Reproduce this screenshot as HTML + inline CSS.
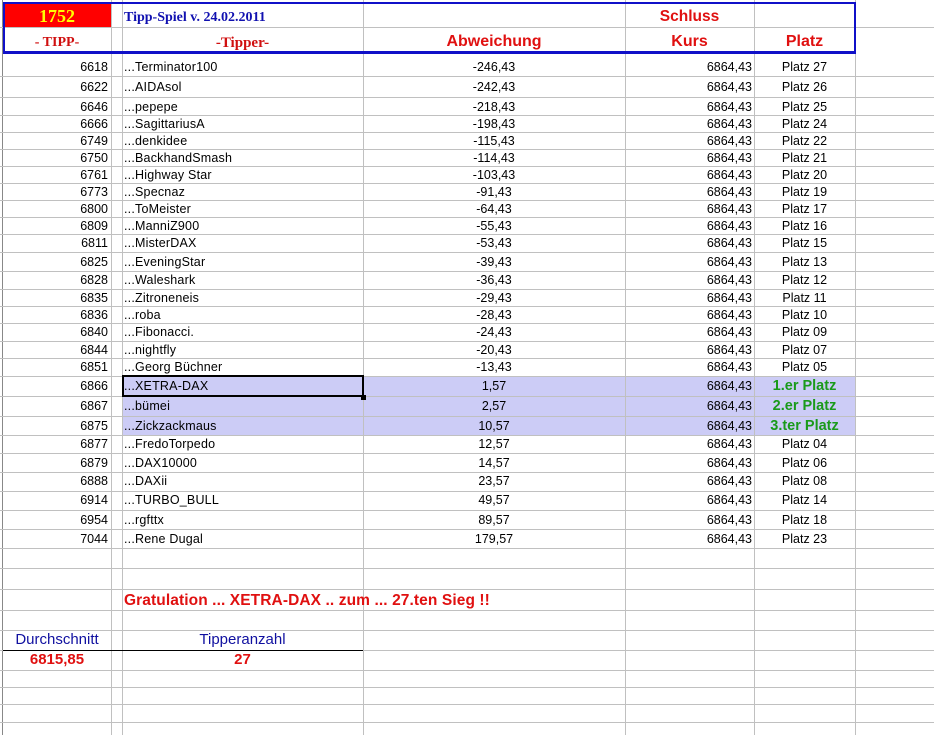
<!DOCTYPE html>
<html><head><meta charset="utf-8"><style>
*{margin:0;padding:0;box-sizing:border-box}
body{width:934px;height:735px;background:#fff;position:relative;overflow:hidden;font-family:"Liberation Sans",Arial,sans-serif;font-size:12.5px;color:#000}
.v{position:absolute;top:0;width:1px;height:735px;background:#c0c0c0}
.h{position:absolute;left:0;width:934px;height:1px;background:#c0c0c0}
.r{position:absolute;left:0;width:934px;height:16px;line-height:16px}
.r span{position:absolute;top:0;white-space:nowrap}
.a{right:826px;text-align:right}
.b{left:124px;letter-spacing:0.2px}
.c{left:363px;width:262px;text-align:center}
.d{right:182px}
.e{left:754px;width:101px;text-align:center}
.g{color:#1a9a1a;font-weight:bold;font-size:14.5px}
.hl{position:absolute;left:122px;width:733px;background:#ccccf6}
</style></head><body>
<div class="hl" style="top:376px;height:59px"></div>
<div class="v" style="left:2px;background:#888"></div>
<div class="v" style="left:111px"></div>
<div class="v" style="left:122px"></div>
<div class="v" style="left:363px"></div>
<div class="v" style="left:625px"></div>
<div class="v" style="left:754px"></div>
<div class="v" style="left:855px"></div>
<div class="h" style="top:27px"></div>
<div class="h" style="top:76px"></div><div class="h" style="top:97px"></div><div class="h" style="top:115px"></div><div class="h" style="top:132px"></div><div class="h" style="top:149px"></div><div class="h" style="top:166px"></div><div class="h" style="top:183px"></div><div class="h" style="top:200px"></div><div class="h" style="top:217px"></div><div class="h" style="top:234px"></div><div class="h" style="top:252px"></div><div class="h" style="top:271px"></div><div class="h" style="top:289px"></div><div class="h" style="top:306px"></div><div class="h" style="top:323px"></div><div class="h" style="top:341px"></div><div class="h" style="top:358px"></div><div class="h" style="top:376px"></div><div class="h" style="top:396px"></div><div class="h" style="top:416px"></div><div class="h" style="top:435px"></div><div class="h" style="top:453px"></div><div class="h" style="top:472px"></div><div class="h" style="top:491px"></div><div class="h" style="top:510px"></div><div class="h" style="top:529px"></div><div class="h" style="top:548px"></div><div class="h" style="top:568px"></div><div class="h" style="top:589px"></div><div class="h" style="top:610px"></div><div class="h" style="top:630px"></div><div class="h" style="top:650px"></div><div class="h" style="top:670px"></div><div class="h" style="top:687px"></div><div class="h" style="top:704px"></div><div class="h" style="top:722px"></div>
<div style="position:absolute;left:3px;top:650px;width:360px;height:1px;background:#000"></div>
<!-- header -->
<div style="position:absolute;left:3px;top:3px;width:108px;height:24px;background:#f00;color:#ff0;font:bold 18px 'Liberation Serif',serif;text-align:center;line-height:26px">1752</div>
<div style="position:absolute;left:3px;top:2px;width:853px;height:52px;border:2px solid #1010c8;border-bottom-width:3px"></div>
<div style="position:absolute;left:124px;top:10px;color:#1010b0;font:bold 14px 'Liberation Serif',serif">Tipp-Spiel v. 24.02.2011</div>
<div style="position:absolute;left:625px;top:8px;width:129px;text-align:center;color:#e01010;font-weight:bold;font-size:15.5px">Schluss</div>
<div style="position:absolute;left:3px;top:35px;width:108px;text-align:center;color:#d01010;font:bold 14px 'Liberation Serif',serif">- TIPP-</div>
<div style="position:absolute;left:122px;top:35px;width:241px;text-align:center;color:#d01010;font:bold 15px 'Liberation Serif',serif">-Tipper-</div>
<div style="position:absolute;left:363px;top:33px;width:262px;text-align:center;color:#e01010;font-weight:bold;font-size:16px">Abweichung</div>
<div style="position:absolute;left:625px;top:33px;width:129px;text-align:center;color:#e01010;font-weight:bold;font-size:16px">Kurs</div>
<div style="position:absolute;left:754px;top:33px;width:101px;text-align:center;color:#e01010;font-weight:bold;font-size:16px">Platz</div>
<!-- rows -->
<div class="r" style="top:59px"><span class="a">6618</span><span class="b">...Terminator100</span><span class="c">-246,43</span><span class="d">6864,43</span><span class="e">Platz 27</span></div>
<div class="r" style="top:79px"><span class="a">6622</span><span class="b">...AIDAsol</span><span class="c">-242,43</span><span class="d">6864,43</span><span class="e">Platz 26</span></div>
<div class="r" style="top:99px"><span class="a">6646</span><span class="b">...pepepe</span><span class="c">-218,43</span><span class="d">6864,43</span><span class="e">Platz 25</span></div>
<div class="r" style="top:116px"><span class="a">6666</span><span class="b">...SagittariusA</span><span class="c">-198,43</span><span class="d">6864,43</span><span class="e">Platz 24</span></div>
<div class="r" style="top:133px"><span class="a">6749</span><span class="b">...denkidee</span><span class="c">-115,43</span><span class="d">6864,43</span><span class="e">Platz 22</span></div>
<div class="r" style="top:150px"><span class="a">6750</span><span class="b">...BackhandSmash</span><span class="c">-114,43</span><span class="d">6864,43</span><span class="e">Platz 21</span></div>
<div class="r" style="top:167px"><span class="a">6761</span><span class="b">...Highway Star</span><span class="c">-103,43</span><span class="d">6864,43</span><span class="e">Platz 20</span></div>
<div class="r" style="top:184px"><span class="a">6773</span><span class="b">...Specnaz</span><span class="c">-91,43</span><span class="d">6864,43</span><span class="e">Platz 19</span></div>
<div class="r" style="top:201px"><span class="a">6800</span><span class="b">...ToMeister</span><span class="c">-64,43</span><span class="d">6864,43</span><span class="e">Platz 17</span></div>
<div class="r" style="top:218px"><span class="a">6809</span><span class="b">...ManniZ900</span><span class="c">-55,43</span><span class="d">6864,43</span><span class="e">Platz 16</span></div>
<div class="r" style="top:235px"><span class="a">6811</span><span class="b">...MisterDAX</span><span class="c">-53,43</span><span class="d">6864,43</span><span class="e">Platz 15</span></div>
<div class="r" style="top:254px"><span class="a">6825</span><span class="b">...EveningStar</span><span class="c">-39,43</span><span class="d">6864,43</span><span class="e">Platz 13</span></div>
<div class="r" style="top:272px"><span class="a">6828</span><span class="b">...Waleshark</span><span class="c">-36,43</span><span class="d">6864,43</span><span class="e">Platz 12</span></div>
<div class="r" style="top:290px"><span class="a">6835</span><span class="b">...Zitroneneis</span><span class="c">-29,43</span><span class="d">6864,43</span><span class="e">Platz 11</span></div>
<div class="r" style="top:307px"><span class="a">6836</span><span class="b">...roba</span><span class="c">-28,43</span><span class="d">6864,43</span><span class="e">Platz 10</span></div>
<div class="r" style="top:324px"><span class="a">6840</span><span class="b">...Fibonacci.</span><span class="c">-24,43</span><span class="d">6864,43</span><span class="e">Platz 09</span></div>
<div class="r" style="top:342px"><span class="a">6844</span><span class="b">...nightfly</span><span class="c">-20,43</span><span class="d">6864,43</span><span class="e">Platz 07</span></div>
<div class="r" style="top:359px"><span class="a">6851</span><span class="b">...Georg  Büchner</span><span class="c">-13,43</span><span class="d">6864,43</span><span class="e">Platz 05</span></div>
<div class="r" style="top:378px"><span class="a">6866</span><span class="b">...XETRA-DAX</span><span class="c">1,57</span><span class="d">6864,43</span><span class="e g">1.er Platz</span></div>
<div class="r" style="top:398px"><span class="a">6867</span><span class="b">...bümei</span><span class="c">2,57</span><span class="d">6864,43</span><span class="e g">2.er Platz</span></div>
<div class="r" style="top:418px"><span class="a">6875</span><span class="b">...Zickzackmaus</span><span class="c">10,57</span><span class="d">6864,43</span><span class="e g">3.ter Platz</span></div>
<div class="r" style="top:436px"><span class="a">6877</span><span class="b">...FredoTorpedo</span><span class="c">12,57</span><span class="d">6864,43</span><span class="e">Platz 04</span></div>
<div class="r" style="top:455px"><span class="a">6879</span><span class="b">...DAX10000</span><span class="c">14,57</span><span class="d">6864,43</span><span class="e">Platz 06</span></div>
<div class="r" style="top:473px"><span class="a">6888</span><span class="b">...DAXii</span><span class="c">23,57</span><span class="d">6864,43</span><span class="e">Platz 08</span></div>
<div class="r" style="top:492px"><span class="a">6914</span><span class="b">...TURBO_BULL</span><span class="c">49,57</span><span class="d">6864,43</span><span class="e">Platz 14</span></div>
<div class="r" style="top:512px"><span class="a">6954</span><span class="b">...rgfttx</span><span class="c">89,57</span><span class="d">6864,43</span><span class="e">Platz 18</span></div>
<div class="r" style="top:531px"><span class="a">7044</span><span class="b">...Rene Dugal</span><span class="c">179,57</span><span class="d">6864,43</span><span class="e">Platz 23</span></div>
<!-- selection -->
<div style="position:absolute;left:122px;top:375px;width:242px;height:22px;border:2px solid #000"></div>
<div style="position:absolute;left:361px;top:395px;width:5px;height:5px;background:#000"></div>
<!-- footer -->
<div style="position:absolute;left:124px;top:592px;color:#e01010;font-weight:bold;font-size:15.5px;letter-spacing:0.1px;white-space:nowrap">Gratulation ...  XETRA-DAX .. zum ... 27.ten Sieg !!</div>
<div style="position:absolute;left:3px;top:631px;width:108px;text-align:center;color:#1010a0;font-size:15px">Durchschnitt</div>
<div style="position:absolute;left:122px;top:631px;width:241px;text-align:center;color:#1010a0;font-size:15px">Tipperanzahl</div>
<div style="position:absolute;left:3px;top:651px;width:108px;text-align:center;color:#e01010;font-weight:bold;font-size:15px">6815,85</div>
<div style="position:absolute;left:122px;top:651px;width:241px;text-align:center;color:#e01010;font-weight:bold;font-size:15px">27</div>
</body></html>
